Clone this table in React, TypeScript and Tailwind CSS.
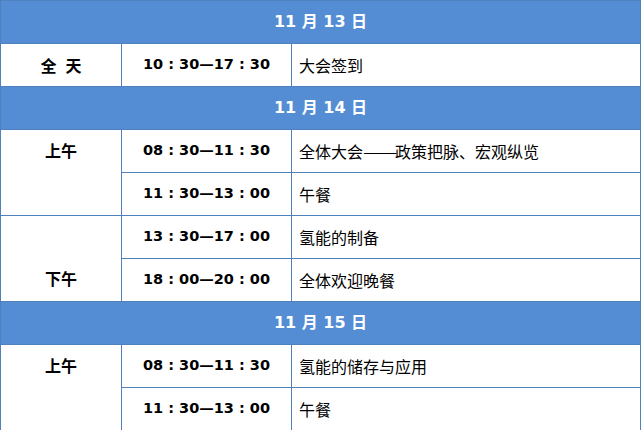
import React from "react";

const B = "border border-[#4f81bd]";

function Header({ text }: { text: string }) {
  return (
    <tr className="h-[43px]">
      <td
        colSpan={3}
        className={`${B} bg-[#548dd4] text-white text-center font-bold text-[16px] [font-family:'DejaVu_Sans','Noto_Sans_CJK_SC',sans-serif]`}
      >
        {text}
      </td>
    </tr>
  );
}

function Time({ t }: { t: string }) {
  return (
    <td className={`${B} text-center font-bold text-[14.5px] text-black [font-family:'DejaVu_Sans','Noto_Sans_CJK_SC',sans-serif]`}>
      {t}
    </td>
  );
}

function Desc({ children }: { children: React.ReactNode }) {
  return (
    <td lang="zh-CN" className={`${B} pl-[7px] text-[16px] text-black [font-family:'Noto_Sans_CJK_SC',sans-serif]`}>
      {children}
    </td>
  );
}

const labelCls = `${B} text-center font-bold text-[16px] text-black [font-family:'Noto_Sans_CJK_SC',sans-serif]`;

export default function App() {
  return (
    <div className="w-[642px] h-[430px] bg-white overflow-hidden">
      <table className="w-[641px] border-collapse table-fixed">
        <colgroup>
          <col className="w-[121px]" />
          <col className="w-[170px]" />
          <col />
        </colgroup>
        <tbody>
          <Header text="11 月 13 日" />
          <tr className="h-[43px]">
            <td className={labelCls}>
              全<span className="inline-block w-[9px]" />天
            </td>
            <Time t="10 : 30—17 : 30" />
            <Desc>大会签到</Desc>
          </tr>
          <Header text="11 月 14 日" />
          <tr className="h-[43px]">
            <td rowSpan={2} className={`${labelCls} align-top pt-[8px]`}>
              上午
            </td>
            <Time t="08 : 30—11 : 30" />
            <Desc>
              全体大会
              <span className="inline-block w-[32px] whitespace-nowrap overflow-visible">
                <span className="inline-block origin-left scale-x-[1.28]">——</span>
              </span>
              政策把脉、宏观纵览
            </Desc>
          </tr>
          <tr className="h-[43px]">
            <Time t="11 : 30—13 : 00" />
            <Desc>午餐</Desc>
          </tr>
          <tr className="h-[43px]">
            <td rowSpan={2} className={`${labelCls} align-bottom pb-[11px]`}>
              下午
            </td>
            <Time t="13 : 30—17 : 00" />
            <Desc>氢能的制备</Desc>
          </tr>
          <tr className="h-[43px]">
            <Time t="18 : 00—20 : 00" />
            <Desc>全体欢迎晚餐</Desc>
          </tr>
          <Header text="11 月 15 日" />
          <tr className="h-[43px]">
            <td rowSpan={2} className={`${labelCls} align-top pt-[8px]`}>
              上午
            </td>
            <Time t="08 : 30—11 : 30" />
            <Desc>氢能的储存与应用</Desc>
          </tr>
          <tr className="h-[43px]">
            <Time t="11 : 30—13 : 00" />
            <Desc>午餐</Desc>
          </tr>
        </tbody>
      </table>
    </div>
  );
}
